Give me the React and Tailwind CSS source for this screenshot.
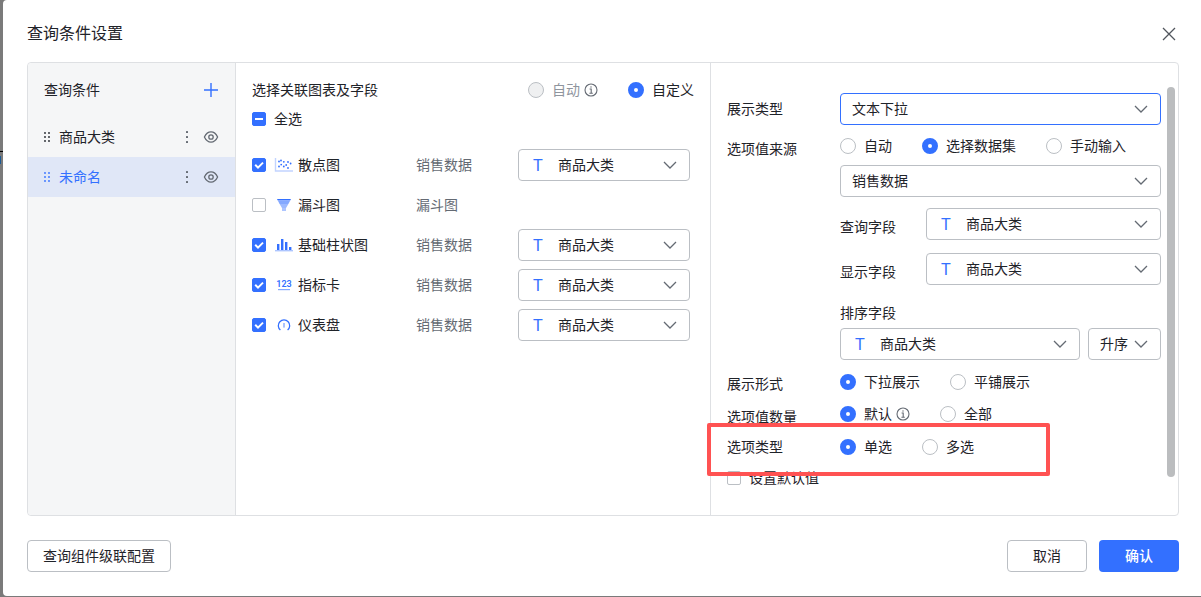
import { useEffect, useRef, useState } from "react";

const conditions = [
  { id: "category", name: "商品大类" },
  { id: "unnamed", name: "未命名" },
];

const charts = [
  { id: "scatter", name: "散点图", dataset: "销售数据", field: true },
  { id: "funnel", name: "漏斗图", dataset: "漏斗图", field: false },
  { id: "bar", name: "基础柱状图", dataset: "销售数据", field: true },
  { id: "metric", name: "指标卡", dataset: "销售数据", field: true },
  { id: "gauge", name: "仪表盘", dataset: "销售数据", field: true },
];

function DragIcon() {
  return (
    <svg width="7" height="12" viewBox="0 0 7 12" fill="currentColor" className="shrink-0">
      <circle cx="1" cy="2" r="0.9" />
      <circle cx="5" cy="2" r="0.9" />
      <circle cx="1" cy="6" r="0.9" />
      <circle cx="5" cy="6" r="0.9" />
      <circle cx="1" cy="10" r="0.9" />
      <circle cx="5" cy="10" r="0.9" />
    </svg>
  );
}

function MoreIcon() {
  return (
    <svg width="16" height="16" viewBox="0 0 16 16" fill="#646a73">
      <rect x="7" y="2" width="2" height="2" rx="0.5" />
      <rect x="7" y="7" width="2" height="2" rx="0.5" />
      <rect x="7" y="12" width="2" height="2" rx="0.5" />
    </svg>
  );
}

function EyeIcon() {
  return (
    <svg width="16" height="16" viewBox="0 0 16 16" fill="none" stroke="#646a73" strokeWidth="1.3">
      <path d="M1.4 8C3 4.6 5.3 2.9 8 2.9S13 4.6 14.6 8C13 11.4 10.7 13.1 8 13.1S3 11.4 1.4 8Z" strokeLinejoin="round" />
      <circle cx="8" cy="8" r="2.2" />
    </svg>
  );
}

function InfoIcon() {
  return (
    <svg width="14" height="14" viewBox="0 0 14 14" fill="none" stroke="#646a73" strokeWidth="1.1" className="ml-1">
      <circle cx="7" cy="7" r="6" />
      <path d="M5.6 6H7.2V10M5.4 10.2H8.8" />
      <rect x="6.4" y="3.4" width="1.2" height="1.2" fill="#646a73" stroke="none" />
    </svg>
  );
}

function ChartIcon({ type }) {
  return (
    <svg width="20" height="16" viewBox="0 0 20 16" className="mr-1 ml-2 shrink-0">
      {type === "scatter" && (
        <>
          <path d="M1.5 1V14H19" fill="none" stroke="#c2d4ff" strokeWidth="1.4" />
          <g fill="#3370ff">
            <circle cx="5" cy="4.5" r="0.9" />
            <circle cx="7" cy="3.5" r="0.9" />
            <circle cx="5" cy="9.5" r="0.9" />
            <circle cx="7.2" cy="7.6" r="0.9" />
            <circle cx="9.8" cy="4.8" r="0.9" />
            <circle cx="9.8" cy="9.5" r="0.9" />
            <circle cx="12.2" cy="8" r="0.9" />
            <circle cx="14" cy="5" r="0.9" />
            <circle cx="14" cy="11" r="0.9" />
            <circle cx="16.6" cy="6.5" r="0.9" />
          </g>
        </>
      )}
      {type === "funnel" && (
        <>
          <path d="M3 2H17L16.2 3.6H3.8Z" fill="#3370ff" />
          <path d="M3.8 3.6H16.2L14.4 7H5.6Z" fill="#85a9ff" />
          <path d="M5.6 7H14.4L12 11H8Z" fill="#9dbaff" />
          <path d="M8 11H12V14H8Z" fill="#adc5ff" />
        </>
      )}
      {type === "bar" && (
        <>
          <g fill="#3370ff">
            <rect x="3" y="7" width="2.4" height="6" />
            <rect x="7" y="2" width="2.4" height="11" />
            <rect x="11" y="5" width="2.4" height="8" />
            <rect x="15" y="10" width="2.4" height="3" />
          </g>
          <rect x="1" y="13" width="18" height="1.4" fill="#adc5ff" />
        </>
      )}
      {type === "metric" && (
        <>
          <text x="10" y="10" textAnchor="middle" fontFamily="'Liberation Sans Narrow', Roboto, sans-serif" fontSize="9" fontWeight="600" fill="#3370ff">
            123
          </text>
          <rect x="4" y="12" width="12" height="1.2" fill="#85a9ff" />
        </>
      )}
      {type === "gauge" && (
        <>
          <path d="M6.4 13A5.7 5.7 0 1 1 13.6 13" fill="none" stroke="#3370ff" strokeWidth="1.3" />
          <rect x="9.3" y="6" width="1.4" height="4.6" fill="#85a9ff" />
        </>
      )}
    </svg>
  );
}

function Checkbox({ checked, indeterminate = false, onChange, children }) {
  const ref = useRef(null);

  useEffect(() => {
    ref.current.indeterminate = indeterminate;
  }, [indeterminate]);

  return (
    <label className="flex cursor-pointer items-center">
      <span className="relative flex size-3.5 shrink-0">
        <input
          ref={ref}
          type="checkbox"
          checked={checked}
          onChange={onChange}
          className="size-3.5 appearance-none rounded-xs border border-[#bbbfc4] bg-white checked:border-[#3370ff] checked:bg-[#3370ff] indeterminate:border-[#3370ff] indeterminate:bg-[#3370ff]"
        />
        {(checked || indeterminate) && (
          <svg viewBox="0 0 14 14" fill="none" stroke="white" strokeWidth="2" className="pointer-events-none absolute inset-0">
            <path d={indeterminate ? "M3 7H11" : "M3.2 6.8L6 9.6L11 4.6"} />
          </svg>
        )}
      </span>
      {children}
    </label>
  );
}

function RadioGroup({ name, label, options, value, onChange }) {
  return (
    <div role="radiogroup" aria-label={label} className="flex h-[22px] items-center gap-[30px]">
      {options.map((o) => (
        <label key={o.text} className="flex items-center whitespace-nowrap">
          <input
            type="radio"
            name={name}
            checked={value === o.text}
            disabled={o.disabled}
            onChange={() => onChange(o.text)}
            className="mr-2 size-4 appearance-none rounded-full border border-[#bbbfc4] bg-white checked:border-6 checked:border-[#3370ff] disabled:bg-[#eff0f1]"
          />
          <span className={o.disabled ? "text-[#8f959e]" : ""}>{o.text}</span>
          {o.info && <InfoIcon />}
        </label>
      ))}
    </div>
  );
}

function Select({ id, label, options, typed = false, active = false, className = "" }) {
  return (
    <div className={`relative h-8 ${className}`}>
      {typed && (
        <span aria-hidden="true" className="pointer-events-none absolute inset-y-0 left-[15px] flex items-center pt-0.5 text-base text-[#3370ff]">
          T
        </span>
      )}
      <select
        id={id}
        aria-label={label}
        className={`size-full appearance-none rounded border bg-transparent pr-8 outline-none ${
          typed ? "pl-[39px]" : "pl-[11px]"
        } ${active ? "border-[#3370ff]" : "border-[#bbbfc4]"}`}
      >
        {options.map((o) => (
          <option key={o}>{o}</option>
        ))}
      </select>
      <svg width="14" height="8" viewBox="0 0 14 8" fill="none" stroke="#646a73" strokeWidth="1.3" className="pointer-events-none absolute top-3 right-[13px]">
        <path d="M1 1L7 7L13 1" />
      </svg>
    </div>
  );
}

function App() {
  const [current, setCurrent] = useState("unnamed");
  const [linked, setLinked] = useState(["scatter", "bar", "metric", "gauge"]);
  const [linkMode, setLinkMode] = useState("自定义");
  const [source, setSource] = useState("选择数据集");
  const [display, setDisplay] = useState("下拉展示");
  const [amount, setAmount] = useState("默认");
  const [optionType, setOptionType] = useState("单选");
  const [useDefault, setUseDefault] = useState(false);

  const allLinked = linked.length === charts.length;

  const toggleChart = (id) => {
    setLinked(linked.includes(id) ? linked.filter((x) => x !== id) : [...linked, id]);
  };

  return (
    <div className="flex min-h-screen bg-[#7a7a7a] pb-px font-['Liberation_Sans','Noto_Sans_CJK_SC',sans-serif] text-sm leading-[22px] text-[#1f2329]">
      {/* Sliver of the dimmed page */}
      <div className="w-[3px] shrink-0 pt-[151px]">
        <div className="h-px bg-black" />
        <div className="mt-1 h-2 w-px bg-[#1c5a94]" />
      </div>

      <div role="dialog" aria-labelledby="dialog-title" className="min-w-0 flex-1 rounded-l bg-white px-6 py-6 pr-[22px]">
        {/* Header */}
        <div className="flex h-5 items-center justify-between">
          <h1 id="dialog-title" className="text-base">查询条件设置</h1>
          <button aria-label="关闭" className="flex size-5 items-center justify-center">
            <svg width="14" height="14" viewBox="0 0 14 14" fill="none" stroke="#51565d" strokeWidth="1.3">
              <path d="M1 1L13 13M13 1L1 13" />
            </svg>
          </button>
        </div>

        <div className="mt-[18px] flex rounded border border-[#dee0e3]">
          {/* Condition list */}
          <div className="w-52 shrink-0 rounded-l border-r border-[#dee0e3] bg-[#f5f6f7]">
            <div className="flex h-[54px] items-center justify-between px-4">
              <h2>查询条件</h2>
              <button aria-label="添加">
                <svg width="16" height="16" viewBox="0 0 16 16" fill="none" stroke="#3370ff" strokeWidth="1.4">
                  <path d="M8 1V15M1 8H15" />
                </svg>
              </button>
            </div>
            <ul>
              {conditions.map((c) => (
                <li
                  key={c.id}
                  onClick={() => setCurrent(c.id)}
                  className={`flex h-10 items-center px-4 ${current === c.id ? "bg-[#e0e7f7] text-[#3370ff]" : ""}`}
                >
                  <DragIcon />
                  <span className="ml-2 flex-1">{c.name}</span>
                  <button aria-label="更多" className="mr-2"><MoreIcon /></button>
                  <button aria-label="显示"><EyeIcon /></button>
                </li>
              ))}
            </ul>
          </div>

          {/* Linked charts */}
          <div className="w-[475px] shrink-0 border-r border-[#dee0e3] px-4 pt-4">
            <div className="flex items-center justify-between">
              <h2>选择关联图表及字段</h2>
              <RadioGroup
                name="link-mode"
                label="关联方式"
                value={linkMode}
                onChange={setLinkMode}
                options={[{ text: "自动", disabled: true, info: true }, { text: "自定义" }]}
              />
            </div>
            <div className="mt-[7px]">
              <Checkbox
                checked={allLinked}
                indeterminate={linked.length > 0 && !allLinked}
                onChange={() => setLinked(allLinked ? [] : charts.map((c) => c.id))}
              >
                <span className="ml-2">全选</span>
              </Checkbox>
            </div>
            <ul className="mt-[15px]">
              {charts.map((c) => (
                <li key={c.id} className="flex h-10 items-center">
                  <div className="w-[164px]">
                    <Checkbox checked={linked.includes(c.id)} onChange={() => toggleChart(c.id)}>
                      <ChartIcon type={c.id} />
                      {c.name}
                    </Checkbox>
                  </div>
                  <span className="w-[102px] text-[#646a73]">{c.dataset}</span>
                  {c.field && <Select label={`${c.name}字段`} options={["商品大类"]} typed className="w-[172px]" />}
                </li>
              ))}
            </ul>
          </div>

          {/* Settings */}
          <div className="flex min-w-0 flex-1 py-6 pr-[3px] pl-4">
            <div className="min-w-0 flex-1 pt-[6px] pb-[2px]">
              <div className="flex items-center">
                <label htmlFor="display-type" className="w-[113px]">展示类型</label>
                <Select id="display-type" options={["文本下拉"]} active className="flex-1" />
              </div>

              <div className="mt-[10px] flex">
                <span className="w-[113px] shrink-0 pt-[3px]">选项值来源</span>
                <div className="min-w-0 flex-1">
                  <RadioGroup
                    name="source"
                    label="选项值来源"
                    value={source}
                    onChange={setSource}
                    options={[{ text: "自动" }, { text: "选择数据集" }, { text: "手动输入" }]}
                  />
                  <Select label="数据集" options={["销售数据"]} className="mt-2" />
                  <div className="mt-[11px] flex items-center">
                    <label htmlFor="query-field" className="w-[86px] pt-[6px]">查询字段</label>
                    <Select id="query-field" options={["商品大类"]} typed className="flex-1" />
                  </div>
                  <div className="mt-[13px] flex items-center">
                    <label htmlFor="show-field" className="w-[86px] pt-[6px]">显示字段</label>
                    <Select id="show-field" options={["商品大类"]} typed className="flex-1" />
                  </div>
                  <label htmlFor="sort-field" className="mt-[17px] mb-1 block">排序字段</label>
                  <div className="flex gap-2">
                    <Select id="sort-field" options={["商品大类"]} typed className="flex-1" />
                    <Select label="排序方式" options={["升序", "降序"]} className="w-[73px]" />
                  </div>
                </div>
              </div>

              <div className="mt-[11px] flex h-[22px]">
                <span className="w-[113px] pt-[2px]">展示形式</span>
                <RadioGroup
                  name="display"
                  label="展示形式"
                  value={display}
                  onChange={setDisplay}
                  options={[{ text: "下拉展示" }, { text: "平铺展示" }]}
                />
              </div>

              <div className="mt-[10px] flex h-[22px]">
                <span className="w-[113px] pt-[3px]">选项值数量</span>
                <RadioGroup
                  name="amount"
                  label="选项值数量"
                  value={amount}
                  onChange={setAmount}
                  options={[{ text: "默认", info: true }, { text: "全部" }]}
                />
              </div>

              <div className="relative mt-[11px] flex h-[22px]">
                <span className="w-[113px]">选项类型</span>
                <RadioGroup
                  name="option-type"
                  label="选项类型"
                  value={optionType}
                  onChange={setOptionType}
                  options={[{ text: "单选" }, { text: "多选" }]}
                />
                {/* Highlight frame */}
                <div className="pointer-events-none absolute -top-[13px] -left-5 z-10 h-[53px] w-[343px] rounded-xs border-4 border-[#ff5252]" />
              </div>

              <div className="mt-[9px]">
                <Checkbox checked={useDefault} onChange={(e) => setUseDefault(e.target.checked)}>
                  <span className="ml-2">设置默认值</span>
                </Checkbox>
              </div>
            </div>

            {/* Scrollbar thumb */}
            <div className="mb-[14px] ml-[6px] w-2 rounded-full bg-[#bbbdbf]" />
          </div>
        </div>

        {/* Footer */}
        <div className="mt-6 flex h-8 gap-3">
          <button className="mr-auto rounded border border-[#bbbfc4] px-[15px]">查询组件级联配置</button>
          <button className="w-20 rounded border border-[#bbbfc4]">取消</button>
          <button className="w-20 rounded bg-[#3370ff] font-medium text-white">确认</button>
        </div>
      </div>
    </div>
  );
}

export default App;
